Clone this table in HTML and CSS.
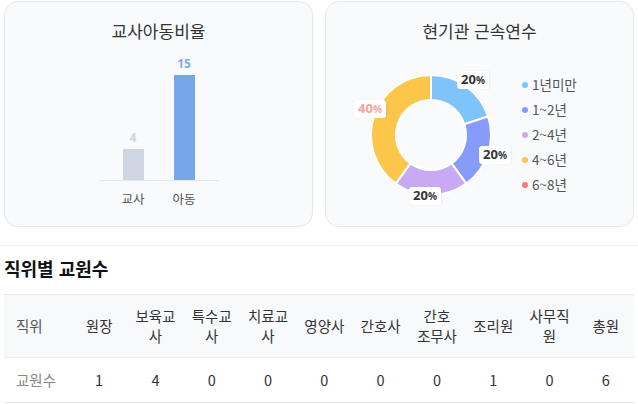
FILE: index.html
```html
<!DOCTYPE html>
<html lang="ko">
<head>
<meta charset="utf-8">
<title>교원 현황</title>
<link rel="stylesheet" href="styles.css">
</head>
<body>
<div class="charts">
  <section class="card">
    <h2 class="card-title">교사아동비율</h2>
    <div class="bar-chart">
      <div class="plot">
        <div class="bar-col">
          <span class="bar-value teacher">4</span>
          <div class="bar teacher" style="height:31px"></div>
        </div>
        <div class="bar-col">
          <span class="bar-value child">15</span>
          <div class="bar child" style="height:105px"></div>
        </div>
      </div>
      <div class="bar-labels">
        <span>교사</span>
        <span>아동</span>
      </div>
    </div>
  </section>
  <section class="card">
    <h2 class="card-title">현기관 근속연수</h2>
    <div class="donut-row">
      <div class="donut">
        <svg width="120" height="120" viewBox="0 0 120 120">
          <path fill="#7ec4fb" stroke="#fff" stroke-width="2" d="M60 0 A60 60 0 0 1 117.06 41.46 L93.29 49.18 A35 35 0 0 0 60 25 Z"/>
          <path fill="#879bfb" stroke="#fff" stroke-width="2" d="M117.06 41.46 A60 60 0 0 1 95.27 108.54 L80.57 88.32 A35 35 0 0 0 93.29 49.18 Z"/>
          <path fill="#c8aaf4" stroke="#fff" stroke-width="2" d="M95.27 108.54 A60 60 0 0 1 24.73 108.54 L39.43 88.32 A35 35 0 0 0 80.57 88.32 Z"/>
          <path fill="#fcc64b" stroke="#fff" stroke-width="2" d="M24.73 108.54 A60 60 0 0 1 60 0 L60 25 A35 35 0 0 0 39.43 88.32 Z"/>
        </svg>
        <span class="pct pct-a">20<small>%</small></span>
        <span class="pct pct-b">20<small>%</small></span>
        <span class="pct pct-c">20<small>%</small></span>
        <span class="pct pct-d warn">40<small>%</small></span>
      </div>
      <ul class="legend">
        <li><i class="dot c1"></i>1년미만</li>
        <li><i class="dot c2"></i>1~2년</li>
        <li><i class="dot c3"></i>2~4년</li>
        <li><i class="dot c4"></i>4~6년</li>
        <li><i class="dot c5"></i>6~8년</li>
      </ul>
    </div>
  </section>
</div>
<section class="staff">
  <h2 class="staff-title">직위별 교원수</h2>
  <table class="staff-table">
    <colgroup><col class="col-first"><col><col><col><col><col><col><col><col><col><col></colgroup>
    <thead>
      <tr>
        <th>직위</th><th>원장</th><th>보육교사</th><th>특수교사</th><th>치료교사</th><th>영양사</th><th>간호사</th><th><span class="nowrap">간호</span> <span class="nowrap">조무사</span></th><th>조리원</th><th>사무직원</th><th>총원</th>
      </tr>
    </thead>
    <tbody>
      <tr>
        <td>교원수</td><td>1</td><td>4</td><td>0</td><td>0</td><td>0</td><td>0</td><td>0</td><td>1</td><td>0</td><td>6</td>
      </tr>
    </tbody>
  </table>
</section>
</body>
</html>
```
FILE: styles.css
```css
* { box-sizing: border-box; }
html, body {
  margin: 0;
  padding: 0;
  background: #fff;
  font-family: "Noto Sans CJK KR", "Noto Sans", sans-serif;
  color: #333;
}
.charts {
  display: grid;
  grid-template-columns: 1fr 1fr;
  gap: 12px;
  padding: 1px 4px 0;
}
.card {
  height: 226px;
  background: #f8fafc;
  border: 1px solid #e5e7eb;
  border-radius: 14px;
  padding-top: 17px;
}
.card-title {
  margin: 0;
  font-size: 17px;
  font-weight: 400;
  line-height: 24px;
  text-align: center;
  color: #333;
}
.bar-chart {
  width: 120px;
  margin: 17px auto 0;
}
.plot {
  height: 121px;
  border-bottom: 1px solid #e3e6eb;
  display: flex;
  justify-content: center;
  align-items: flex-end;
  gap: 30px;
}
.bar-col {
  width: 21px;
  display: flex;
  flex-direction: column;
  align-items: center;
}
.bar-value {
  font-size: 12px;
  font-weight: 700;
  line-height: 14px;
  margin-bottom: 4px;
  font-family: "Noto Sans", sans-serif;
}
.bar-value.teacher { color: #cdd3e0; }
.bar-value.child { color: #7faaea; }
.bar { width: 21px; }
.bar.teacher { background: #cfd5e2; }
.bar.child { background: #77a7ea; }
.bar-labels {
  display: flex;
  justify-content: center;
  gap: 30px;
  margin-top: 10px;
}
.bar-labels span {
  width: 21px;
  display: flex;
  justify-content: center;
  white-space: nowrap;
  font-size: 12.5px;
  line-height: 16px;
  color: #555;
}
.donut-row {
  display: flex;
  align-items: center;
  gap: 31px;
  padding-left: 45px;
  margin-top: 29px;
}
.donut {
  position: relative;
  width: 120px;
  height: 120px;
  flex: none;
}
.donut svg { display: block; }
.pct {
  position: absolute;
  transform: translate(-50%, -50%);
  background: #fff;
  border-radius: 3px;
  padding: 0 4px;
  font-family: "Noto Sans", sans-serif;
  font-size: 13px;
  font-weight: 700;
  line-height: 17px;
  color: #333;
  white-space: nowrap;
  box-shadow: 0 0 2px rgba(0,0,0,0.06);
}
.pct small { font-size: 10px; }
.pct.warn { color: #f6a39a; }
.pct-a { left: 102px; top: 5px; }
.pct-b { left: 124px; top: 80px; }
.pct-c { left: 54px; top: 121px; }
.pct-d { left: -1px; top: 34px; }
.legend {
  list-style: none;
  margin: 0;
  padding: 0;
}
.legend li {
  display: flex;
  align-items: center;
  gap: 4px;
  font-size: 13.5px;
  line-height: 25px;
  color: #555;
  white-space: nowrap;
}
.dot {
  width: 6px;
  height: 6px;
  border-radius: 50%;
  display: inline-block;
}
.c1 { background: #7ec4fb; }
.c2 { background: #879bfb; }
.c3 { background: #c8aaf4; }
.c4 { background: #fcc64b; }
.c5 { background: #fb7b6b; }
.staff {
  margin-top: 18px;
  border-top: 1px solid #f0f1f3;
  padding: 10px 4px 0;
}
.staff-title {
  margin: 0;
  font-size: 18px;
  font-weight: 700;
  line-height: 24px;
  color: #111;
}
.staff-table {
  margin-top: 14px;
  width: 100%;
  table-layout: fixed;
  border-collapse: collapse;
  font-size: 14.5px;
  line-height: 20px;
}
.col-first { width: 67px; }
.nowrap { white-space: nowrap; }
.staff-table th,
.staff-table td {
  text-align: center;
  padding: 11px 6px;
  font-weight: 400;
}
.staff-table thead tr {
  background: #f8f9fb;
  border-top: 1px solid #e5e7eb;
  border-bottom: 1px solid #eceef1;
}
.staff-table th { color: #333; }
.staff-table td { padding: 12px 6px; color: #333; }
.staff-table tbody tr { border-bottom: 1px solid #e5e7eb; }
.staff-table th:first-child,
.staff-table td:first-child {
  text-align: left;
  padding-left: 12px;
}
.staff-table th:first-child { color: #555; }
.staff-table td:first-child { color: #888; }
```
